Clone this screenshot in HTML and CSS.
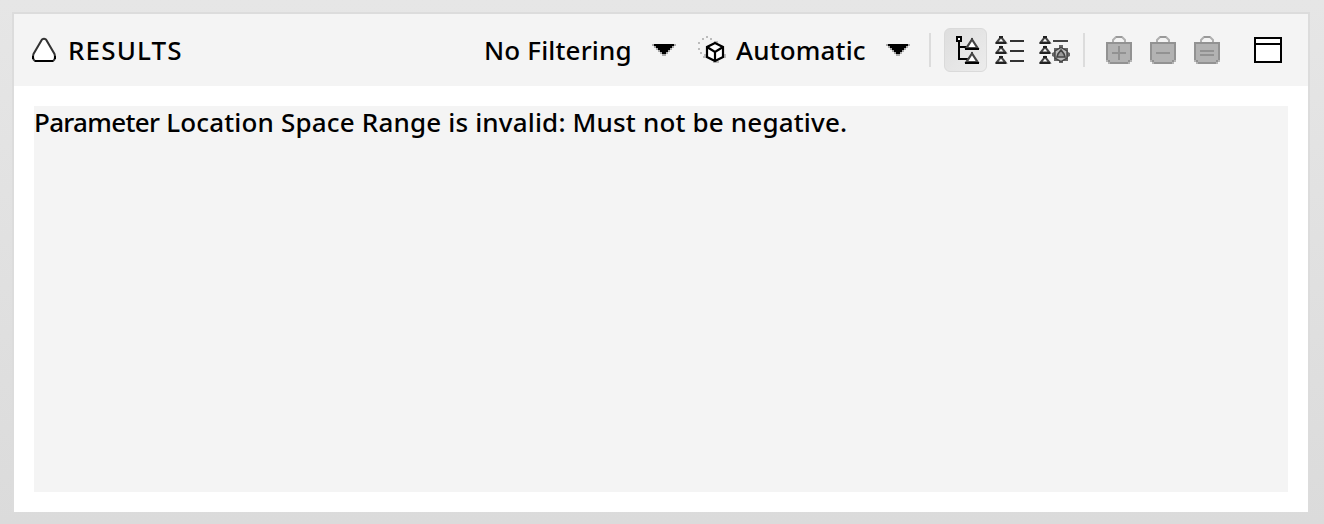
FILE: index.html
```html
<!DOCTYPE html>
<html lang="en">
<head>
<meta charset="utf-8">
<title>Results</title>
<link rel="stylesheet" href="styles.css">
</head>
<body>
<svg width="0" height="0" class="defs">
  <defs>
    <g id="mini">
      <path d="M6 1L10.500 6.500H1.500Z" fill="#fff" stroke="#444" stroke-width="2"/>
      <path d="M4 0h4v2H4zM1 6h10v2H1z" fill="#222"/>
      <path d="M0 6h1v2H0zM11 6h1v2h-1z" fill="#777"/>
    </g>
    <g id="node">
      <path d="M7 1.5L12.500 10H1.500Z" fill="#fff" stroke="#444" stroke-width="2.200"/>
      <path d="M6 0h2v2H6z" fill="#444"/>
      <path d="M0 10h14v2H0z"/>
    </g>
    <g id="bag">
      <path d="M7 6V4L10 1H16L19 4V6" fill="#f4f4f4" stroke="#b0b0b0" stroke-width="2"/>
      <path d="M10 0h6v2h-6z" fill="#999"/>
      <path d="M0 6h26v18h-2v2h-2v2H4v-2H2v-2H0z" fill="#929292"/>
      <path d="M2 8h22v16h-2v2H4v-2H2z" fill="#b2b2b2"/>
      <path d="M0 24h2v2H0zM24 24h2v2h-2zM2 26h2v2H2zM22 26h2v2h-2z" fill="#b4b4b4"/>
    </g>
  </defs>
</svg>
<main class="panel">
  <header class="toolbar">
    <svg class="logo" width="26" height="26" viewBox="0 0 26 26">
      <path d="M11 2.5Q13 1 15 2.5L23.5 17Q25 22 22 24H4Q1 22 2.5 17Z" fill="#fff" stroke="#333" stroke-width="2"/>
      <path d="M4 23h18v2H4zM1 19h2v3H1zM23 19h2v3h-2z"/>
    </svg>
    <h1 class="title">RESULTS</h1>
    <span class="filter">No Filtering</span>
    <svg class="arrow" width="24" height="12" viewBox="0 0 24 12"><path d="M0 0h24v2H0zM2 2h20v2H2zM4 4h16v2H4zM6 6h12v2H6zM8 8h8v2H8zM10 10h4v2h-4z" fill="#aaa"/><path d="M2 0h20v2H2zM4 2h16v2H4zM6 4h12v2H6zM8 6h8v2H8zM10 8h4v2h-4z"/></svg>
    <svg class="cube" width="30" height="28" viewBox="0 0 30 28">
      <path d="M8 0h2v2H8zM4 2h2v2H4zM12 2h2v2h-2zM0 6h2v2H0zM0 12h2v2H0zM2 16h2v2H2zM16 5h4v2h-4zM6 18h2v4H6zM5 20h2v2H5zM26 18h2v4h-2zM15 25h6v2h-6z" fill="#bbb"/>
      <path d="M17 7L25 11V21L17 25L9 21V11Z" fill="#fff" stroke="#000" stroke-width="2.2"/>
      <path d="M9 11L17 16L25 11M17 16V25" fill="none" stroke="#000" stroke-width="2.2"/>
    </svg>
    <span class="mode">Automatic</span>
    <svg class="arrow" width="24" height="12" viewBox="0 0 24 12"><path d="M0 0h24v2H0zM2 2h20v2H2zM4 4h16v2H4zM6 6h12v2H6zM8 8h8v2H8zM10 10h4v2h-4z" fill="#aaa"/><path d="M2 0h20v2H2zM4 2h16v2H4zM6 4h12v2H6zM8 6h8v2H8zM10 8h4v2h-4z"/></svg>
    <i class="rule rule-first"></i>
    <button class="tree" type="button" aria-label="Tree">
      <svg width="24" height="28" viewBox="0 0 24 28">
        <path d="M3 5V23H12M3 11H12" fill="none" stroke="#000" stroke-width="2"/>
        <path d="M1 1h4v4H1z" fill="#fff" stroke="#000" stroke-width="2"/>
        <use href="#node" x="9" y="2"/><use href="#node" x="9" y="16"/>
      </svg>
    </button>
    <svg class="list" width="30" height="28" viewBox="0 0 30 28">
      <use href="#mini"/><use href="#mini" y="10"/><use href="#mini" y="20"/>
      <path d="M15 4h14v2H15zM15 14h14v2H15zM15 24h14v2H15z" fill="#333"/>
    </svg>
    <svg class="config" width="31" height="28" viewBox="0 0 31 28">
      <use href="#mini"/><use href="#mini" y="10"/><use href="#mini" y="20"/>
      <path d="M14 4h15v2H14z" fill="#444"/>
      <path d="M20 9h4v3h5v4l2 1v3l-2 1v4h-5v2h-4v-2h-5v-4l-2-1v-3l2-1v-4h5z" fill="#666"/>
      <path d="M22 11.500L28 15V22L22 25.500L16 22V15Z" fill="#bbb" stroke="#444" stroke-width="1.400"/>
      <path d="M22 14L25 18L26 21H18L19 18Z" fill="#999" stroke="#444" stroke-width="1.600"/>
    </svg>
    <i class="rule rule-second"></i>
    <div class="bags">
      <svg width="26" height="28" viewBox="0 0 26 28"><use href="#bag"/><path d="M6 16h14v2H6zM12 10h2v14h-2z" fill="#929292"/></svg>
      <svg width="26" height="28" viewBox="0 0 26 28"><use href="#bag"/><path d="M6 16h14v2H6z" fill="#929292"/></svg>
      <svg width="26" height="28" viewBox="0 0 26 28"><use href="#bag"/><path d="M6 14h14v2H6zM6 18h14v2H6z" fill="#929292"/></svg>
    </div>
    <svg class="window" width="28" height="26" viewBox="0 0 28 26"><path d="M1 1H27V25H1ZM1 7H27" fill="#fff" stroke="#000" stroke-width="2"/></svg>
  </header>
  <section class="output"><span class="subject">Parameter</span> Location Space Range is invalid: Must not be negative.</section>
</main>
</body>
</html>
```
FILE: styles.css
```css
* { box-sizing: border-box; }
body {
  margin: 0;
  height: 524px;
  padding: 12px 14px 12px 12px;
  background: linear-gradient(#e6e6e6, #dbdbdb);
  color: #000;
  font: 500 26px/32px "Noto Sans", sans-serif;
  overflow: hidden;
}
.defs { display: none; }
.panel {
  display: flex;
  flex-direction: column;
  width: 1298px;
  height: 500px;
  border: 2px solid #dcdcdc;
  border-bottom: 0;
  background: #fff;
}
.toolbar {
  display: flex;
  align-items: center;
  flex: none;
  height: 72px;
  padding: 0 26px 0 17px;
  background: #f4f4f4;
}
.toolbar > * { flex: none; }
.toolbar svg { display: block; }
.title, .filter, .mode { white-space: nowrap; }
.title { width: 416px; margin: 0 0 0 11px; font: inherit; letter-spacing: 1.15px; }
.filter { width: 168px; letter-spacing: 0.15px; }
.cube { margin-left: 22px; }
.mode { width: 150px; margin-left: 8px; letter-spacing: 0.15px; }
.rule { width: 2px; height: 34px; background: #dcdcdc; }
.rule-first { margin: 0 13px 0 19px; }
.rule-second { margin: 0 21px 0 13px; }
.tree {
  display: flex;
  align-items: center;
  width: 43px;
  height: 44px;
  padding: 0 0 0 11px;
  border: 1px solid #dadada;
  border-radius: 6px;
  background: linear-gradient(135deg, #dedede, #ececec);
}
.list { margin-left: 8px; }
.config { margin-left: 14px; }
.bags { display: flex; gap: 18px; }
.window { margin-left: 34px; }
.output {
  flex: 1;
  margin: 20px;
  background: #f4f4f4;
  letter-spacing: 0.17px;
  white-space: nowrap;
}
.subject { letter-spacing: -0.7px; }
```
